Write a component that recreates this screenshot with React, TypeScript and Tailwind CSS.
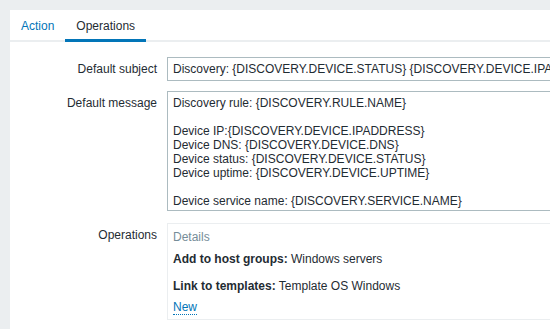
import { FunctionComponent } from "react";

const messageLines = [
    "Discovery rule: {DISCOVERY.RULE.NAME}",
    "",
    "Device IP:{DISCOVERY.DEVICE.IPADDRESS}",
    "Device DNS: {DISCOVERY.DEVICE.DNS}",
    "Device status: {DISCOVERY.DEVICE.STATUS}",
    "Device uptime: {DISCOVERY.DEVICE.UPTIME}",
    "",
    "Device service name: {DISCOVERY.SERVICE.NAME}",
];

const App: FunctionComponent = () => {
    return (
        <div className="w-[550px] h-[329px] overflow-hidden bg-[#ebeef0] pt-[10px] pl-[10px] font-['Liberation_Sans',Arial,sans-serif] text-[12px] leading-[14px] text-[#1f2c33]">
            <div className="w-[700px] h-[400px] bg-white">
                <div className="flex border-b-2 border-[#ebeef0]">
                    <div className="px-[11px] pt-[9px] pb-[6px] -mb-[2px] border-b-[3px] border-transparent text-[#0275b8]">Action</div>
                    <div className="px-[11px] pt-[9px] pb-[6px] -mb-[2px] border-b-[3px] border-[#0275b8]">Operations</div>
                </div>
                <div className="flex flex-col gap-[10px] pt-[15px]">
                    <div className="flex gap-[10px]">
                        <div className="w-[147px] text-right pt-[5px]">Default subject</div>
                        <div className="w-[453px] h-[24px] border border-[#acbbc0] px-[5px] pt-[4px] whitespace-nowrap overflow-hidden">
                            Discovery: {"{DISCOVERY.DEVICE.STATUS}"} {"{DISCOVERY.DEVICE.IPADDRESS}"}
                        </div>
                    </div>
                    <div className="flex gap-[10px]">
                        <div className="w-[147px] text-right pt-[5px]">Default message</div>
                        <div className="w-[453px] border border-[#acbbc0] px-[5px] pt-[4px] pb-[2px]">
                            {messageLines.map((line, i) => (
                                <div key={i} className="h-[14px] whitespace-nowrap">{line}</div>
                            ))}
                        </div>
                    </div>
                    <div className="flex gap-[10px] mt-[2px]">
                        <div className="w-[147px] text-right pt-[5px]">Operations</div>
                        <div className="w-[453px] border border-[#ebeef0] px-[5px] pt-[6px] pb-[5px]">
                            <div className="text-[#768d99]">Details</div>
                            <div className="mt-[8px]">
                                <span className="font-bold">Add to host groups:</span> Windows servers
                            </div>
                            <div className="mt-[13px]">
                                <span className="font-bold">Link to templates:</span> Template OS Windows
                            </div>
                            <div className="mt-[7px]">
                                <span className="text-[#0275b8] border-b border-dotted border-[#0275b8]">New</span>
                            </div>
                        </div>
                    </div>
                </div>
            </div>
        </div>
    );
};

export default App;
